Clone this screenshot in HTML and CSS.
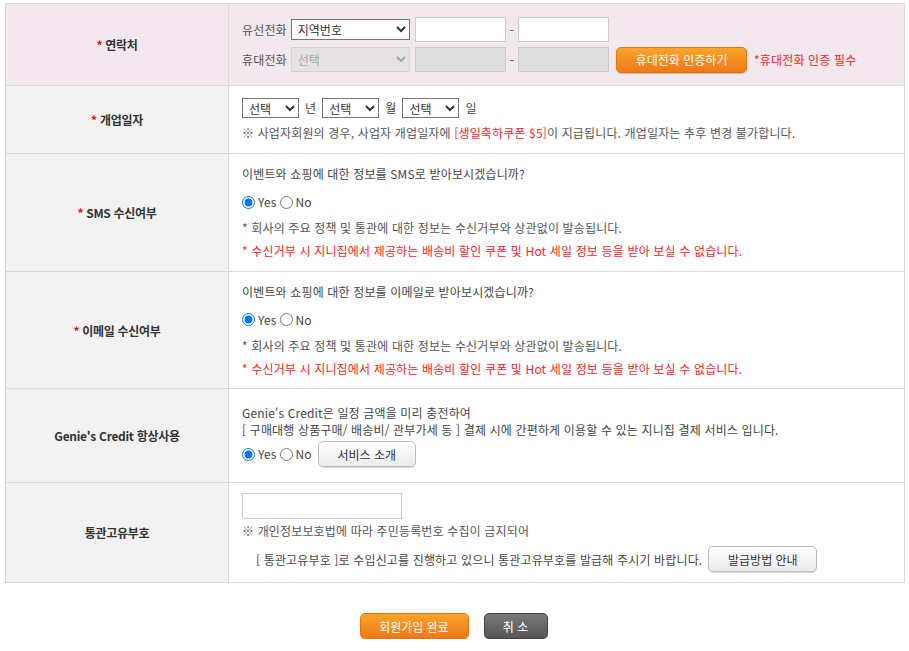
FILE: index.html
```html
<!DOCTYPE html>
<html lang="ko">
<head>
    <meta charset="UTF-8">
    <title>회원가입</title>
    <link rel="stylesheet" href="styles.css">
</head>
<body>
    <div class="wrap">
        <table class="join-table">
            <tr class="row-contact">
                <th><span class="req">*</span> 연락처</th>
                <td>
                    <div class="line">
                        <span class="lbl">유선전화</span>
                        <select class="sel-area"><option>지역번호</option></select>
                        <input type="text" class="num">
                        <span class="dash">-</span>
                        <input type="text" class="num">
                    </div>
                    <div class="line mobile">
                        <span class="lbl">휴대전화</span>
                        <select class="sel-area" disabled><option>선택</option></select>
                        <input type="text" class="num" disabled>
                        <span class="dash">-</span>
                        <input type="text" class="num" disabled>
                        <button class="btn-orange btn-auth">휴대전화 인증하기</button>
                        <span class="red">*휴대전화 인증 필수</span>
                    </div>
                </td>
            </tr>
            <tr class="row-date">
                <th><span class="req">*</span> 개업일자</th>
                <td>
                    <div class="line">
                        <select class="sel-date"><option>선택</option></select>
                        <span class="unit">년</span>
                        <select class="sel-date"><option>선택</option></select>
                        <span class="unit">월</span>
                        <select class="sel-date"><option>선택</option></select>
                        <span class="unit">일</span>
                    </div>
                    <p class="note">※ 사업자회원의 경우, 사업자 개업일자에 <span class="red">[생일축하쿠폰 $5]</span>이 지급됩니다. 개업일자는 추후 변경 불가합니다.</p>
                </td>
            </tr>
            <tr class="row-agree row-sms">
                <th><span class="req">*</span> SMS 수신여부</th>
                <td>
                    <p class="q">이벤트와 쇼핑에 대한 정보를 SMS로 받아보시겠습니까?</p>
                    <div class="radios">
                        <label><input type="radio" name="sms" checked> Yes</label>
                        <label><input type="radio" name="sms"> No</label>
                    </div>
                    <p class="note">* 회사의 주요 정책 및 통관에 대한 정보는 수신거부와 상관없이 발송됩니다.</p>
                    <p class="note warn">* 수신거부 시 지니집에서 제공하는 배송비 할인 쿠폰 및 Hot 세일 정보 등을 받아 보실 수 없습니다.</p>
                </td>
            </tr>
            <tr class="row-agree row-mail">
                <th><span class="req">*</span> 이메일 수신여부</th>
                <td>
                    <p class="q">이벤트와 쇼핑에 대한 정보를 이메일로 받아보시겠습니까?</p>
                    <div class="radios">
                        <label><input type="radio" name="mail" checked> Yes</label>
                        <label><input type="radio" name="mail"> No</label>
                    </div>
                    <p class="note">* 회사의 주요 정책 및 통관에 대한 정보는 수신거부와 상관없이 발송됩니다.</p>
                    <p class="note warn">* 수신거부 시 지니집에서 제공하는 배송비 할인 쿠폰 및 Hot 세일 정보 등을 받아 보실 수 없습니다.</p>
                </td>
            </tr>
            <tr class="row-credit">
                <th>Genie's Credit 항상사용</th>
                <td>
                    <p class="desc">Genie's Credit은 일정 금액을 미리 충전하여<br>[ 구매대행 상품구매/ 배송비/ 관부가세 등 ] 결제 시에 간편하게 이용할 수 있는 지니집 결제 서비스 입니다.</p>
                    <div class="radios">
                        <label><input type="radio" name="credit" checked> Yes</label>
                        <label><input type="radio" name="credit"> No</label>
                        <button class="btn-gray btn-service">서비스 소개</button>
                    </div>
                </td>
            </tr>
            <tr class="row-customs">
                <th>통관고유부호</th>
                <td>
                    <input type="text" class="customs-input">
                    <p class="note">※ 개인정보보호법에 따라 주민등록번호 수집이 금지되어</p>
                    <div class="line indent">
                        <span>[ 통관고유부호 ]로 수입신고를 진행하고 있으니 통관고유부호를 발급해 주시기 바랍니다.</span>
                        <button class="btn-gray btn-guide">발급방법 안내</button>
                    </div>
                </td>
            </tr>
        </table>

        <div class="actions">
            <button class="btn-orange btn-submit">회원가입 완료</button>
            <button class="btn-dark btn-cancel">취 소</button>
        </div>
    </div>
</body>
</html>
```

FILE: styles.css
```css
body {
    margin: 0;
    font-family: "Noto Sans CJK KR", "Noto Sans", sans-serif;
    font-size: 12px;
    color: #444;
    background: #fff;
}
.wrap {
    padding: 3px 4px 0 5px;
}
p { margin: 0; }
.join-table {
    width: 900px;
    border-collapse: collapse;
}
.join-table th,
.join-table td {
    border: 1px solid #d9d9d9;
}
.join-table th {
    width: 222px;
    padding: 0;
    background: #f2f2f2;
    color: #333;
    font-size: 12px;
    font-weight: bold;
    letter-spacing: -0.3px;
}
.join-table td {
    padding: 0 12px 0 13px;
    text-align: left;
    letter-spacing: 0.15px;
}
.req { color: #f00; }
.note { line-height: 18px; color: #555; }
.red,
.note.warn { color: #f22; }

/* contact */
.row-contact th,
.row-contact td {
    background: #f3e8ee;
}
.row-contact { height: 82px; }
.line {
    display: flex;
    align-items: center;
    gap: 5px;
}
.line.mobile { margin-top: 5px; }
.lbl { color: #555; margin-right: -1px; }
.sel-area {
    width: 119px;
    height: 21px;
    font-family: inherit;
    font-size: 12px;
    border: 1px solid #767676;
    background: #fff;
    color: #333;
    padding: 0 2px;
}
.sel-area:disabled {
    background: #e0e0e0;
    border-color: #c8c8c8;
    color: #888;
    height: 25px;
}
.num {
    width: 91px;
    height: 25px;
    box-sizing: border-box;
    border: 1px solid #ccc;
    background: #fff;
}
.num:disabled {
    background: #dedede;
    border-color: #ccc;
}
.dash { color: #555; margin: 0 -1px; }
.btn-orange {
    border: 1px solid #e2740f;
    border-radius: 5px;
    background: linear-gradient(#f9a52a, #ee7819);
    color: #fff;
    font-family: inherit;
    font-size: 12px;
    box-shadow: 0 1px 1px rgba(0, 0, 0, 0.2);
}
.btn-auth {
    width: 131px;
    height: 26px;
    margin-left: 2px;
}
.mobile .red { margin-left: 2px; }

/* date */
.row-date { height: 68px; }
.sel-date {
    width: 57px;
    height: 20px;
    font-family: inherit;
    font-size: 12px;
    border: 1px solid #767676;
    background: #fff;
    color: #333;
    padding: 0 2px;
}
.row-date .note { margin-top: 6px; }
.unit { color: #444; margin: 0 1px; }

/* agree rows */
.row-sms { height: 118px; }
.row-mail { height: 117px; }
.q { line-height: 18px; }
.radios {
    display: flex;
    align-items: center;
    margin: 10px 0 8px;
    line-height: 18px;
}
.radios label {
    display: flex;
    align-items: center;
    margin-right: 3px;
}
.radios input[type="radio"] {
    margin: 0 3px 0 0;
    width: 13px;
    height: 13px;
}
.note.warn { margin-top: 5px; }

/* credit */
.row-credit { height: 94px; }
.desc { line-height: 17px; }
.row-credit .radios { margin: 3px 0 0; }
.btn-gray {
    border: 1px solid #bdbdbd;
    border-radius: 5px;
    background: linear-gradient(#fff, #ebebeb);
    color: #333;
    font-family: inherit;
    font-size: 12px;
    box-shadow: 0 1px 1px rgba(0, 0, 0, 0.15);
}
.btn-service {
    width: 98px;
    height: 26px;
    margin-left: 3px;
}

/* customs */
.row-customs { height: 100px; }
.customs-input {
    display: block;
    width: 160px;
    height: 26px;
    box-sizing: border-box;
    border: 1px solid #ccc;
}
.row-customs .note { margin-top: 3px; }
.line.indent {
    padding-left: 14px;
    margin-top: 6px;
    gap: 6px;
}
.btn-guide {
    width: 109px;
    height: 26px;
}

/* bottom buttons */
.actions {
    display: flex;
    justify-content: center;
    gap: 15px;
    margin-top: 30px;
    padding-right: 3px;
}
.btn-submit {
    width: 109px;
    height: 26px;
}
.btn-dark {
    border: 1px solid #444;
    border-radius: 5px;
    background: linear-gradient(#7a7a7a, #555);
    color: #fff;
    font-family: inherit;
    font-size: 12px;
    box-shadow: 0 1px 1px rgba(0, 0, 0, 0.2);
}
.btn-cancel {
    width: 64px;
    height: 26px;
}
```
